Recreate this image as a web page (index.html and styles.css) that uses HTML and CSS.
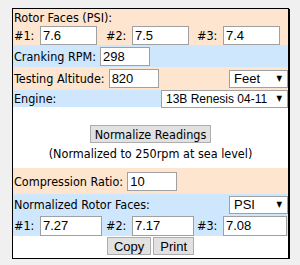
FILE: index.html
```html
<!DOCTYPE html>
<html lang="en">
<head>
  <meta charset="UTF-8">
  <meta name="viewport" content="width=device-width, initial-scale=1.0">
  <title>Rotor Compression Normalizer</title>
  <link rel="stylesheet" href="styles.css">
</head>
<body>
  <div class="calc">
    <div class="row peach">
      <div class="label-line">Rotor Faces (PSI):</div>
      <div class="faces">
        <div class="face"><span class="num">#1:</span><input type="text" value="7.6"></div>
        <div class="face"><span class="num">#2:</span><input type="text" value="7.5"></div>
        <div class="face"><span class="num">#3:</span><input type="text" value="7.4"></div>
      </div>
    </div>
    <div class="row blue line">Cranking RPM:<input type="text" class="short" value="298"></div>
    <div class="row peach line split alt">
      <span>Testing Altitude:<input type="text" class="short" value="820"></span>
      <span class="sel unit"><select><option>Feet</option><option>Meters</option></select></span>
    </div>
    <div class="row blue line split engine">
      <span>Engine:</span>
      <span class="sel wide"><select><option>13B Renesis 04-11</option></select></span>
    </div>
    <div class="middle">
      <button type="button" class="normalize">Normalize Readings</button>
      <div class="note">(Normalized to 250rpm at sea level)</div>
    </div>
    <div class="row peach line comp">Compression Ratio:<input type="text" class="short" value="10"></div>
    <div class="row blue">
      <div class="split out-head">
        <span>Normalized Rotor Faces:</span>
        <span class="sel unit"><select><option>PSI</option><option>kPa</option></select></span>
      </div>
      <div class="faces out">
        <div class="face"><span class="num">#1:</span><input type="text" value="7.27"></div>
        <div class="face"><span class="num">#2:</span><input type="text" value="7.17"></div>
        <div class="face"><span class="num">#3:</span><input type="text" value="7.08"></div>
      </div>
    </div>
    <div class="actions">
      <button type="button">Copy</button>
      <button type="button">Print</button>
    </div>
  </div>
</body>
</html>
```

FILE: styles.css
```css
body { margin: 0; padding: 8px 0 0 12px; background: #f0f0f0; font-family: "DejaVu Sans Condensed", "DejaVu Sans", Verdana, sans-serif; font-stretch: semi-condensed; font-size: 12.5px; color: #000; }
.calc { width: 275px; height: 249px; border: 1px solid #000; box-shadow: 1px 1px 0 #000; background: #fff; display: flex; flex-direction: column; }
.row { padding: 0 0 0 1px; }
.peach { background: #fde5cf; }
.blue { background: #cfe7fd; }
.label-line { height: 17px; line-height: 17px; }
.faces { display: grid; grid-template-columns: 92px 91px 92px; height: 19px; }
.face { display: flex; align-items: center; }
.num { width: 26px; }
input { font-family: "Liberation Sans", Arial, sans-serif; font-size: 13px; height: 19px; box-sizing: border-box; border: 1px solid #a0a0a0; padding: 0 2px; margin: 0; width: 57px; }
.out { height: 21px; }
.out input { width: 62px; height: 20px; }
.out .face:last-child input { width: 64px; }
.line { display: flex; align-items: center; height: 22px; }
.line input { margin-left: 4px; }
.short { width: 50px; }
.split { display: flex; align-items: center; justify-content: space-between; }
.alt { height: 23px; }
.engine { height: 17px; }
.sel { position: relative; display: inline-block; }
.sel select { appearance: none; font-family: "Liberation Sans", Arial, sans-serif; font-size: 13px; height: 18px; border: 1px solid #a0a0a0; background: #fff; padding: 0 0 0 4px; margin: 0; color: #000; }
.sel::after { content: "\25BC"; position: absolute; right: 6px; top: 4px; font-size: 8px; pointer-events: none; }
.unit select { width: 59px; }
.wide select { width: 127px; font-size: 12px; }
.middle { height: 61px; display: flex; flex-direction: column; align-items: center; padding-top: 18px; box-sizing: border-box; gap: 3px; }
button { font-family: "DejaVu Sans Condensed", "DejaVu Sans", Verdana, sans-serif; font-stretch: semi-condensed; font-size: 12.5px; background: #e1e1e1; border: 1px solid #adadad; padding: 0 4px; height: 18px; margin: 0; color: #000; }
.note { line-height: 15px; }
.comp { height: 26px; }
.out-head { height: 21px; }
.actions { display: flex; justify-content: center; gap: 2px; padding-top: 1px; }
.actions button { font-family: "Liberation Sans", Arial, sans-serif; font-size: 13px; padding: 0 6px; }
```
